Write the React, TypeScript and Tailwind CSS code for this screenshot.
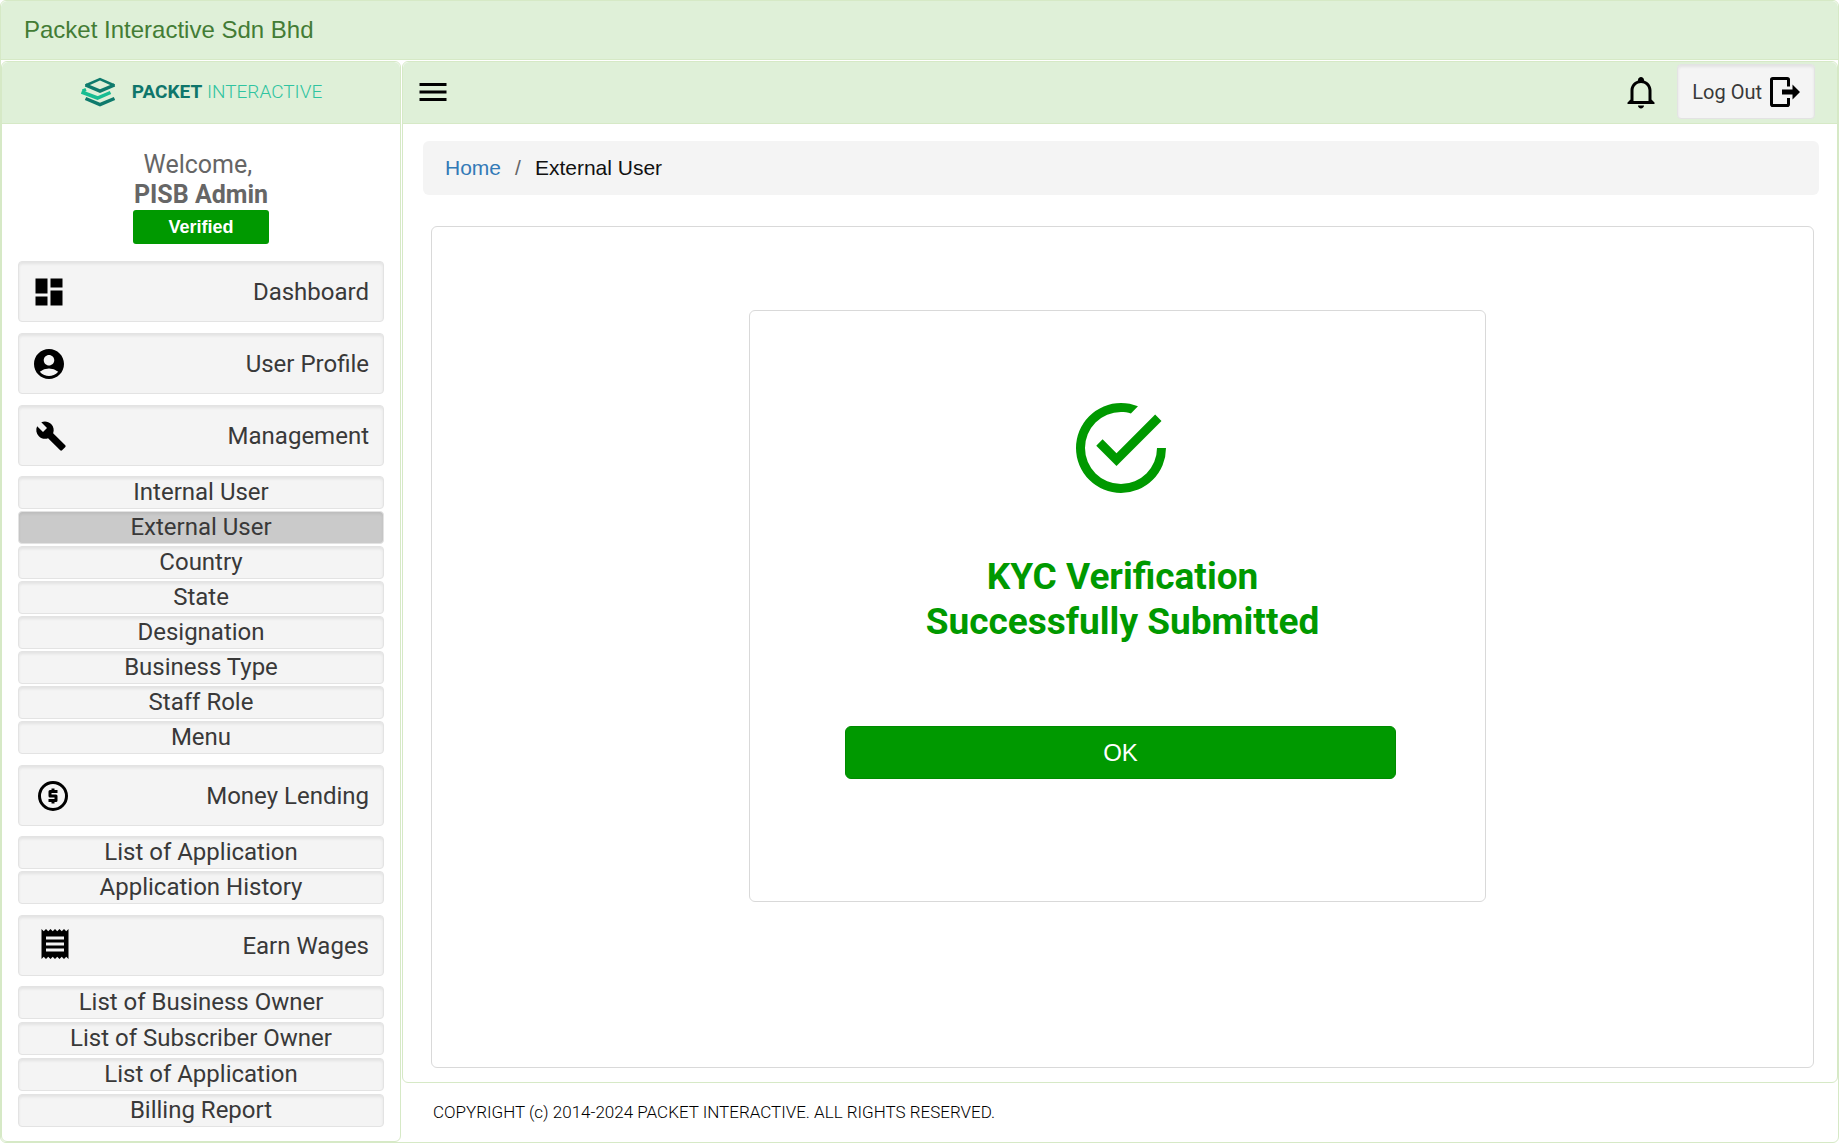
import React from "react";
import { MdDashboard, MdAccountCircle, MdBuild, MdReceipt, MdMenu } from "react-icons/md";

type IconProps = { className?: string };

const path = (d: string) =>
  function Icon({ className }: IconProps) {
    return (
      <svg viewBox="0 0 24 24" fill="currentColor" className={className} aria-hidden="true">
        <path d={d} />
      </svg>
    );
  };

const DollarCircle = path(
  "M12,2A10,10 0 0,1 22,12A10,10 0 0,1 12,22A10,10 0 0,1 2,12A10,10 0 0,1 12,2M12,4A8,8 0 0,0 4,12A8,8 0 0,0 12,20A8,8 0 0,0 20,12A8,8 0 0,0 12,4M11,17V16H9V14H13V13H10A1,1 0 0,1 9,12V9A1,1 0 0,1 10,8H11V7H13V8H15V10H11V11H14A1,1 0 0,1 15,12V15A1,1 0 0,1 14,16H13V17H11Z",
);
const Bell = path(
  "M10 21H14C14 22.1 13.1 23 12 23S10 22.1 10 21M21 19V20H3V19L5 17V11C5 7.9 7 5.2 10 4.3V4C10 2.9 10.9 2 12 2S14 2.9 14 4V4.3C17 5.2 19 7.9 19 11V17L21 19M17 11C17 8.2 14.8 6 12 6S7 8.2 7 11V18H17V11Z",
);
const CheckCircle = path(
  "M20,12A8,8 0 0,1 12,20A8,8 0 0,1 4,12A8,8 0 0,1 12,4C12.76,4 13.5,4.11 14.2,4.31L15.77,2.74C14.61,2.26 13.34,2 12,2A10,10 0 0,0 2,12A10,10 0 0,0 12,22A10,10 0 0,0 22,12M7.91,10.08L6.5,11.5L11,16L21,6L19.59,4.58L11,13.17L7.91,10.08Z",
);

function LogOutIcon() {
  return (
    <svg viewBox="0 0 30 30" className="size-[30px]" fill="none" aria-hidden="true">
      <path
        d="M18.500 9.500V2.800a1.300 1.300 0 0 0-1.300-1.300H2.800a1.300 1.300 0 0 0-1.300 1.300v24.400a1.300 1.300 0 0 0 1.300 1.300h14.400a1.300 1.300 0 0 0 1.300-1.300V21"
        stroke="#000"
        strokeWidth="3"
      />
      <path d="M12 12.500h10.500V7.500L30 15l-7.500 7.500v-5H12z" fill="#000" />
    </svg>
  );
}

function Logo() {
  return (
    <div className="flex items-center gap-4">
      <svg viewBox="0 0 36 30" className="h-[30px] w-9" fill="none" aria-hidden="true">
        <path d="M5.500 8.500 20 2l14.500 6.500" stroke="#0f7a6c" strokeWidth="2.500" />
        <path d="M6 12.500 2.500 14" stroke="#17bd92" strokeWidth="3" />
        <path d="M1.500 15 17.500 21l13-5.500" stroke="#17bd92" strokeWidth="3.500" />
        <path d="M5.500 8 20 14l14.500-6" stroke="#0f7a6c" strokeWidth="3.500" />
        <path d="M5.500 21.500 20 27.500l14.500-6" stroke="#0f7a6c" strokeWidth="3.500" />
      </svg>
      <span className="font-['Roboto'] text-[19px] leading-6 font-light text-[#2fc4a0]">
        <b className="font-bold text-[#0f766b]">PACKET</b> INTERACTIVE
      </span>
    </div>
  );
}

const wellFrame = "rounded border border-[#e3e3e3] text-[#393939] shadow-[inset_0_2px_3px_rgba(0,0,0,0.07)]";
const well = `${wellFrame} bg-[#f4f4f4]`;
const panelBar = "flex h-[62px] items-center border-b border-[#d6e9c6] bg-[#dff0d8] rounded-t-md pb-0.5";

type Group = { label: string; icon: React.ReactNode; items: string[]; listGap?: string };

const groups: Group[] = [
  { label: "Dashboard", icon: <MdDashboard className="size-9" />, items: [] },
  { label: "User Profile", icon: <MdAccountCircle className="size-9" />, items: [] },
  {
    label: "Management",
    icon: <MdBuild className="ml-1 size-8" />,
    items: [
      "Internal User",
      "External User",
      "Country",
      "State",
      "Designation",
      "Business Type",
      "Staff Role",
      "Menu",
    ],
  },
  {
    label: "Money Lending",
    icon: <DollarCircle className="ml-1 size-9" />,
    items: ["List of Application", "Application History"],
  },
  {
    label: "Earn Wages",
    icon: <MdReceipt className="mb-1 ml-1.5 size-9" />,
    items: ["List of Business Owner", "List of Subscriber Owner", "List of Application", "Billing Report"],
    listGap: "gap-[3px]",
  },
];

function Sidebar() {
  return (
    <aside className="flex w-[400px] shrink-0 flex-col rounded-md border border-[#d6e9c6] bg-white">
      <div className={`justify-center ${panelBar}`}>
        <Logo />
      </div>
      <div className="flex flex-col items-center pt-[26px] font-['Roboto'] text-[25px] leading-[30px] text-[#666]">
        <span>Welcome,&nbsp;</span>
        <b>PISB Admin</b>
        <span className="w-[136px] rounded-[3px] bg-[#090] text-center font-['Liberation_Sans'] text-[18px] leading-[34px] font-bold text-white">
          Verified
        </span>
      </div>
      <nav className="flex flex-col gap-[11px] px-4 pt-[17px] pb-[14px] font-['Roboto'] text-[24px]">
        {groups.map((g) => (
          <div key={g.label} className="flex flex-col gap-[10px]">
            <button className={`flex h-[61px] items-center justify-between pr-[14px] pl-3 ${well}`}>
              <span className="text-black">{g.icon}</span>
              <span className="leading-7">{g.label}</span>
            </button>
            {g.items.length > 0 && (
              <ul className={`flex flex-col ${g.listGap ?? "gap-0.5"}`}>
                {g.items.map((item) => (
                  <li key={item} className="flex">
                    <button
                      className={`h-[33px] w-full leading-[31px] ${
                        item === "External User" ? `${wellFrame} bg-[#cacaca]` : well
                      }`}
                    >
                      {item}
                    </button>
                  </li>
                ))}
              </ul>
            )}
          </div>
        ))}
      </nav>
    </aside>
  );
}

export default function App() {
  return (
    <div className="flex min-h-screen flex-col rounded-md border border-[#d6e9c6] bg-white font-['Liberation_Sans',sans-serif]">
      <header className="rounded-t-md border-b border-[#d6e9c6] bg-[#dff0d8] px-[23px] text-[24px] leading-[58px] text-[#437c35]">
        Packet Interactive Sdn Bhd
      </header>
      <div className="flex flex-1 gap-px pt-px">
        <Sidebar />
        <div className="flex min-w-0 flex-1 flex-col">
          <main className="flex flex-1 flex-col rounded-md border border-[#d6e9c6]">
            <div className={`justify-between pr-[22px] pl-3 ${panelBar}`}>
              <button aria-label="Toggle menu">
                <MdMenu className="size-9" />
              </button>
              <div className="flex items-center gap-[18px]">
                <button aria-label="Notifications">
                  <Bell className="size-9" />
                </button>
                <button className={`flex h-[55px] items-center gap-2 px-[14px] font-['Roboto'] text-[20px] ${well}`}>
                  Log Out
                  <LogOutIcon />
                </button>
              </div>
            </div>
            <nav
              aria-label="Breadcrumb"
              className="mr-[18px] ml-5 mt-[17px] flex gap-[14px] rounded-md bg-[#f4f4f4] px-[22px] text-[21px] leading-[54px]"
            >
              <a href="#" className="text-[#337ab7]">
                Home
              </a>
              <span className="text-[#666]">/</span>
              <span className="text-[#111]">External User</span>
            </nav>
            <section className="mt-[31px] mr-[23px] mb-[14px] ml-7 flex flex-1 flex-col items-center rounded-md border border-[#d9d9d9] pt-[83px] pr-[10px]">
              <div className="flex w-[737px] max-w-full flex-col items-center rounded-md border border-[#d9d9d9] pt-[83px] pr-[89px] pb-[122px] pl-[95px] text-[#090]">
                <CheckCircle className="size-[108px]" />
                <h1 className="mt-[52px] pl-1 text-center font-['Roboto'] text-[37px] leading-[45px] font-bold">
                  KYC Verification
                  <br />
                  Successfully Submitted
                </h1>
                <button className="mt-[82px] h-[53px] w-full rounded-md border border-[#008a00] bg-[#090] text-[24px] text-white">
                  OK
                </button>
              </div>
            </section>
          </main>
          <footer className="px-[31px] font-['Roboto'] text-[17px] leading-[59px] font-light text-black">
            COPYRIGHT (c) 2014-2024 PACKET INTERACTIVE. ALL RIGHTS RESERVED.
          </footer>
        </div>
      </div>
    </div>
  );
}
